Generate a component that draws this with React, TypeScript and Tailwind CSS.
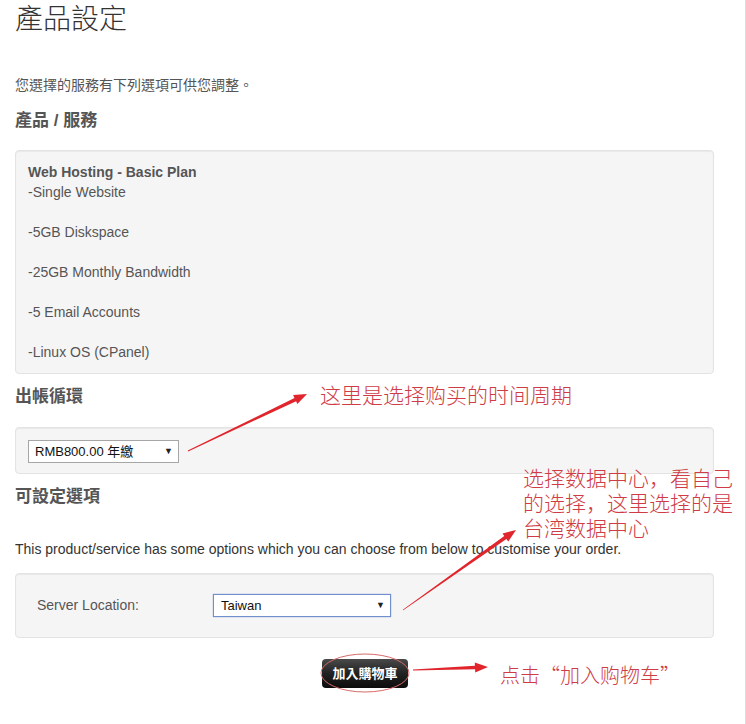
import React from 'react';

const sans = "font-['Liberation_Sans','Noto_Sans_CJK_TC',sans-serif]";
const note = "font-['Noto_Sans_CJK_SC',sans-serif] text-[#cf3c46] font-light";

// tapered arrow as one polygon: thin tail, thicker shaft, pointed head
function arrow(x1: number, y1: number, x2: number, y2: number) {
  const dx = x2 - x1;
  const dy = y2 - y1;
  const len = Math.hypot(dx, dy);
  const ux = dx / len;
  const uy = dy / len;
  const nx = -uy;
  const ny = ux;
  const hl = 13;
  const bx = x2 - ux * hl;
  const by = y2 - uy * hl;
  const p = (x: number, y: number) => `${x.toFixed(1)},${y.toFixed(1)}`;
  return [
    p(x1 + nx * 0.4, y1 + ny * 0.4),
    p(bx + nx * 1.8, by + ny * 1.8),
    p(bx + nx * 5, by + ny * 5),
    p(x2, y2),
    p(bx - nx * 5, by - ny * 5),
    p(bx - nx * 1.8, by - ny * 1.8),
    p(x1 - nx * 0.4, y1 - ny * 0.4),
  ].join(' ');
}

const Well = ({ className, children }: { className?: string; children: React.ReactNode }) => (
  <div className={`bg-[#f5f5f5] border border-[#e3e3e3] rounded-[4px] shadow-[inset_0_1px_1px_rgba(0,0,0,0.05)] ${className ?? ''}`}>
    {children}
  </div>
);

const FakeSelect = ({ value, className }: { value: string; className: string }) => (
  <div className={`flex items-center justify-between bg-white text-[13px] text-[#111] ${className}`}>
    <span>{value}</span>
    <span className="text-[9px] text-[#222]">▼</span>
  </div>
);

const App = () => {
  return (
    <div className={`relative w-[746px] min-h-[724px] bg-white border-r border-[#dedede] ${sans}`}>
      <div className="ml-[15px] w-[699px]">
        <h1 className="text-[28px] leading-[40px] font-light text-[#333]">產品設定</h1>
        <p className="mt-[35px] text-[14px] leading-[20px] text-[#555]">您選擇的服務有下列選項可供您調整。</p>

        <h3 className="mt-[14px] text-[17px] leading-[24px] font-bold text-[#555]">產品 / 服務</h3>
        <Well className="mt-[17px] h-[224px] px-[12px] pt-[11px] text-[14px] leading-[20px] text-[#555]">
          <p className="font-bold">Web Hosting - Basic Plan</p>
          <p>-Single Website</p>
          <p className="mt-[20px]">-5GB Diskspace</p>
          <p className="mt-[20px]">-25GB Monthly Bandwidth</p>
          <p className="mt-[20px]">-5 Email Accounts</p>
          <p className="mt-[20px]">-Linux OS (CPanel)</p>
        </Well>

        <h3 className="mt-[11px] text-[17px] leading-[24px] font-bold text-[#555]">出帳循環</h3>
        <Well className="mt-[18px] h-[47px] pl-[12px] pt-[12px]">
          <FakeSelect
            value="RMB800.00 年繳"
            className="w-[151px] h-[23px] pl-[6px] pr-[5px] border border-[#a6a6a6]"
          />
        </Well>

        <h3 className="mt-[11px] text-[17px] leading-[24px] font-bold text-[#555]">可設定選項</h3>
        <p className="mt-[30px] text-[14px] leading-[20px] text-[#333]">
          This product/service has some options which you can choose from below to customise your order.
        </p>
        <Well className="mt-[14px] h-[65px] flex items-center pl-[21px]">
          <span className="w-[176px] text-[14px] text-[#555]">Server Location:</span>
          <FakeSelect
            value="Taiwan"
            className="w-[178px] h-[23px] pl-[7px] pr-[5px] border border-[#6f90cc] shadow-[0_0_1px_#6f90cc]"
          />
        </Well>

        <div className="mt-[21px] ml-[307px]">
          <button className="w-[86px] h-[29px] rounded-[4px] bg-gradient-to-b from-[#4a4a4a] via-[#222] to-[#0c0c0c] text-white text-[13px] font-bold">
            加入購物車
          </button>
        </div>
      </div>

      {/* annotations laid over the page */}
      <p className={`absolute left-[320px] top-[380px] text-[21px] leading-[28px] ${note}`}>
        这里是选择购买的时间周期
      </p>
      <div className={`absolute left-[523px] top-[465px] text-[21px] leading-[25px] ${note}`}>
        <p className="h-[25px]">选择数据中心，看自己</p>
        <p className="h-[25px]">的选择，这里选择的是</p>
        <p className="h-[25px]">台湾数据中心</p>
      </div>
      <p className={`absolute left-[500px] top-[661px] text-[20px] leading-[28px] ${note}`}>
        点击“加入购物车”
      </p>

      <svg className="absolute left-0 top-0 pointer-events-none" width="746" height="724">
        <polygon points={arrow(188, 451, 307, 394)} fill="#e0262c" />
        <polygon points={arrow(403, 610, 516, 530)} fill="#e0262c" />
        <polygon points={arrow(413, 670, 488, 667)} fill="#e0262c" />
        <ellipse cx="365" cy="673" rx="44" ry="19" fill="none" stroke="#d86a6a" strokeWidth="1" />
      </svg>
    </div>
  );
};

export default App;
